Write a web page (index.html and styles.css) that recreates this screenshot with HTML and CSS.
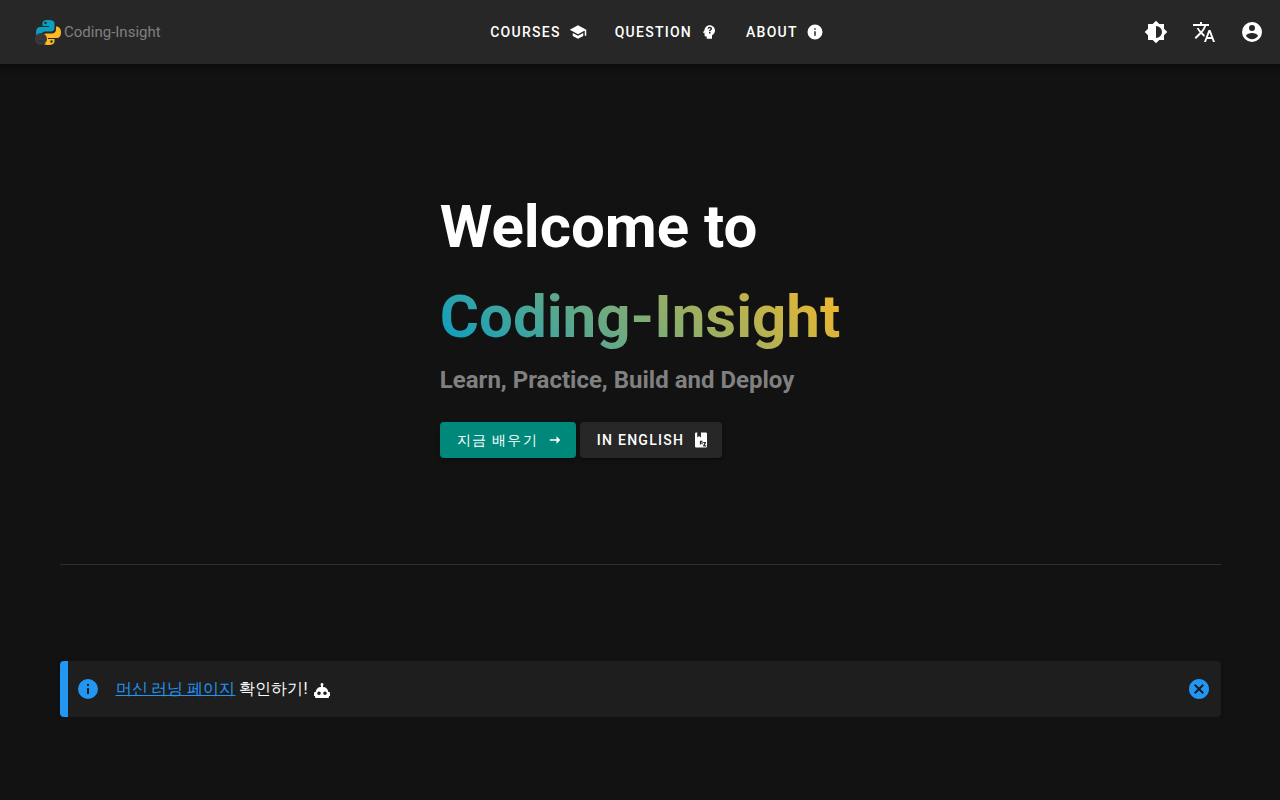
FILE: index.html
```html
<!DOCTYPE html>
<html lang="en">
<head>
<meta charset="utf-8">
<meta name="viewport" content="width=device-width, initial-scale=1">
<title>Coding-Insight</title>
<link rel="stylesheet" href="styles.css">
</head>
<body>
<header class="app-bar">
  <a class="brand" href="#">
    <svg class="brand-mark" viewBox="0 0 28 28" aria-hidden="true">
      <path fill="#0b9fc0" d="M14 2C9.500 2 8.500 3.500 8.500 5.500V8H15V9H6C3.500 9 2 11 2 14.500C2 17 3 19.500 5.500 19.500H7.500V17C7.500 15 9 13.500 11.500 13.500H17C19 13.500 20.500 12 20.500 10V5.500C20.500 3 18.500 2 14 2Z"/>
      <path fill="#fdb924" d="M22 8.500V11.500C22 14 20 15.500 18 15.500H12C10 15.500 8.500 17 8.500 19V23C8.500 26 11 27 14.500 27C18.500 27 20.500 25.500 20.500 23.500V21H14V20H23C25.500 20 27 18 27 14.500C27 11 25.500 8.500 22 8.500Z"/>
      <circle cx="11.500" cy="5" r="1.200" fill="#262626"/>
      <circle cx="17.500" cy="23.500" r="1.200" fill="#262626"/>
      <circle cx="7" cy="21" r="6" fill="#393939"/>
      <path fill="none" stroke="#262626" d="M4.500 19V20M9.500 19V20M4.500 22.500L6 23.500L7 22.500L8 23.500L9.500 22.500"/>
    </svg>
    <span>Coding-Insight</span>
  </a>
  <nav class="nav">
    <a class="btn" href="#">Courses
      <svg class="icon" viewBox="0 0 24 24" aria-hidden="true"><path d="M12,3L1,9L12,15L21,10.09V17H23V9M5,13.18V17.18L12,21L19,17.18V13.18L12,17L5,13.18Z"/></svg>
    </a>
    <a class="btn" href="#">Question
      <svg class="icon" viewBox="0 0 24 24" aria-hidden="true"><path fill-rule="evenodd" d="M13 3C9.230 3 6.190 5.950 6 9.660L4.080 12.190C3.840 12.500 4.080 13 4.500 13H6V16A2 2 0 0 0 8 18H9V21H16V16.310C18.370 15.190 20 12.800 20 10C20 6.140 16.880 3 13 3ZM14 14H12V12H14ZM15.800 8.600C15.500 9.100 14.800 9.500 14.400 9.900C14.100 10.200 14 10.500 14 11H12C12 10 12.300 9.300 12.900 8.800C13.500 8.300 14 8.100 14 7.500C14 7 13.600 6.700 13 6.700C12.400 6.700 12 7.100 12 7.700H10C10 6.100 11.300 5 13 5C14.700 5 16 6 16 7.500C16 7.900 15.900 8.300 15.800 8.600Z"/></svg>
    </a>
    <a class="btn" href="#">About
      <svg class="icon" viewBox="0 0 24 24" aria-hidden="true"><path d="M13,9H11V7H13M13,17H11V11H13M12,2A10,10 0 0,0 2,12A10,10 0 0,0 12,22A10,10 0 0,0 22,12A10,10 0 0,0 12,2Z"/></svg>
    </a>
  </nav>
  <div class="actions">
    <button class="icon-btn" type="button" aria-label="Toggle theme"><svg viewBox="0 0 24 24"><path d="M12,18V6A6,6 0 0,1 18,12A6,6 0 0,1 12,18M20,15.31L23.31,12L20,8.69V4H15.31L12,0.69L8.69,4H4V8.69L0.69,12L4,15.31V20H8.69L12,23.31L15.31,20H20V15.31Z"/></svg></button>
    <button class="icon-btn" type="button" aria-label="Language"><svg viewBox="0 0 24 24"><path d="M12.87,15.07L10.33,12.56L10.36,12.53C12.1,10.59 13.34,8.36 14.07,6H17V4H10V2H8V4H1V6H12.17C11.5,7.92 10.44,9.75 9,11.35C8.07,10.32 7.3,9.19 6.69,8H4.69C5.42,9.63 6.42,11.17 7.67,12.56L2.58,17.58L4,19L9,14L12.11,17.11L12.87,15.07M18.5,10H16.5L12,22H14L15.12,19H19.87L21,22H23L18.5,10M15.88,17L17.5,12.67L19.12,17H15.88Z"/></svg></button>
    <button class="icon-btn" type="button" aria-label="Account"><svg viewBox="0 0 24 24"><path d="M12,19.2C9.5,19.2 7.29,17.92 6,16C6.03,14 10,12.9 12,12.9C14,12.9 17.97,14 18,16C16.71,17.92 14.5,19.2 12,19.2M12,5A3,3 0 0,1 15,8A3,3 0 0,1 12,11A3,3 0 0,1 9,8A3,3 0 0,1 12,5M12,2A10,10 0 0,0 2,12A10,10 0 0,0 12,22A10,10 0 0,0 22,12C22,6.47 17.5,2 12,2Z"/></svg></button>
  </div>
</header>
<main class="page">
  <section class="hero">
    <div class="hero-body">
      <h1 class="title">Welcome to<br><span class="title-brand">Coding-Insight</span></h1>
      <p class="subtitle">Learn, Practice, Build and Deploy</p>
      <div class="hero-actions">
        <a class="btn btn-raised btn-primary" href="#">지금 배우기
          <svg class="icon" viewBox="0 0 24 24" aria-hidden="true"><path d="M14 16.940V12.940H5.080L5.050 10.930H14V6.940L19 11.940Z"/></svg>
        </a>
        <a class="btn btn-raised" href="#">In English
          <svg class="icon" viewBox="0 0 24 24" aria-hidden="true"><path fill-rule="evenodd" d="M5.500 2H7V8.500L9.500 6.500L12 8.500V2H18.500A1.500 1.500 0 0 1 20 3.500V20.500A1.500 1.500 0 0 1 18.500 22H5.500A1.500 1.500 0 0 1 4 20.500V3.500A1.500 1.500 0 0 1 5.500 2ZM10.500 13V18H12V16.500H13V18H14V13ZM12 14.200H13V15.300H12ZM15 14.500V16H16.500L15 19V20.500H19V19H17L18.500 16V14.500Z"/></svg>
        </a>
      </div>
    </div>
  </section>
  <hr class="divider">
  <section class="alert" role="status">
    <svg class="alert-icon" viewBox="0 0 24 24" aria-hidden="true"><path d="M13,9H11V7H13M13,17H11V11H13M12,2A10,10 0 0,0 2,12A10,10 0 0,0 12,22A10,10 0 0,0 22,12A10,10 0 0,0 12,2Z"/></svg>
    <p class="alert-text"><span><a href="#">머신 러닝 페이지</a> 확인하기!</span>
      <svg class="robot" viewBox="0 0 16 16" aria-hidden="true"><path fill-rule="evenodd" d="M8 0A1.500 1.500 0 0 1 9 2.600V4C12 4 14 6 14.300 9H15Q16 9 16 10V13H15V14Q15 15 14 15H2Q1 15 1 14V13H0V10Q0 9 1 9H1.700C2 6 4 4 7 4V2.600A1.500 1.500 0 0 1 8 0ZM5 8.500A1.800 1.800 0 1 0 5 12.100A1.800 1.800 0 1 0 5 8.500ZM11 8.500A1.800 1.800 0 1 0 11 12.100A1.800 1.800 0 1 0 11 8.500Z"/></svg>
    </p>
    <button class="alert-close" type="button" aria-label="Close"><svg viewBox="0 0 24 24"><path d="M12,2C17.53,2 22,6.47 22,12C22,17.53 17.53,22 12,22C6.47,22 2,17.53 2,12C2,6.47 6.47,2 12,2M15.59,7L12,10.59L8.41,7L7,8.41L10.59,12L7,15.59L8.41,17L12,13.41L15.59,17L17,15.59L13.41,12L17,8.41L15.59,7Z"/></svg></button>
  </section>
</main>
</body>
</html>
```
FILE: styles.css
```css
* { box-sizing: border-box; }
body {
  margin: 0;
  background: #121212;
  color: #fff;
  font: 16px/24px Roboto, sans-serif;
}
a { color: inherit; }
button { border: 0; background: none; color: inherit; padding: 0; cursor: pointer; }
svg { display: block; fill: currentColor; flex: none; }

.app-bar {
  display: flex;
  align-items: center;
  justify-content: space-between;
  height: 64px;
  padding: 0 4px 0 34px;
  background: #272727;
  box-shadow: 0 2px 4px -1px rgba(0, 0, 0, .2), 0 4px 5px rgba(0, 0, 0, .14), 0 1px 10px rgba(0, 0, 0, .12);
}
.brand {
  display: flex;
  align-items: center;
  gap: 2px;
  width: 144px;
  font-size: 15px;
  color: #808080;
  text-decoration: none;
}
.brand-mark { width: 28px; height: 28px; }
.nav, .actions { display: flex; }

.btn {
  display: inline-flex;
  align-items: center;
  gap: 8px;
  height: 36px;
  padding: 0 12px 0 16px;
  border-radius: 4px;
  font-size: 14px;
  font-weight: 500;
  letter-spacing: .09em;
  text-transform: uppercase;
  text-decoration: none;
  white-space: nowrap;
}
.icon { width: 18px; height: 18px; }
.icon-btn { display: grid; place-items: center; width: 48px; height: 48px; }
.icon-btn svg { width: 24px; height: 24px; }

.page { max-width: 1185px; margin: 0 auto; padding: 0 12px; }
.hero { display: flex; justify-content: center; padding: 118px 0 106px; }
.title { margin: 0; font-size: 60px; line-height: 90px; font-weight: 700; }
.title-brand {
  display: inline-block;
  background: linear-gradient(45deg, #0b9fc0 4%, #fdb924);
  -webkit-background-clip: text;
  background-clip: text;
  color: transparent;
}
.subtitle { margin: 0; color: #808080; font-size: 24px; line-height: 36px; font-weight: 700; }
.hero-actions { display: flex; gap: 4px; padding-top: 24px; }
.btn-raised {
  padding: 0 12px 0 17px;
  background: #272727;
  box-shadow: 0 3px 1px -2px rgba(0, 0, 0, .2), 0 2px 2px rgba(0, 0, 0, .14), 0 1px 5px rgba(0, 0, 0, .12);
}
.btn-primary { background: #00897b; }

.divider { margin: 0 0 96px; border: 0; border-top: 1px solid #2e2e2e; }
.alert {
  display: flex;
  align-items: center;
  min-height: 56px;
  padding: 0 10px 0 8px;
  border-left: 8px solid #2196f3;
  border-radius: 4px;
  background: #1e1e1e;
  box-shadow: 0 3px 1px -2px rgba(0, 0, 0, .2), 0 2px 2px rgba(0, 0, 0, .14), 0 1px 5px rgba(0, 0, 0, .12);
}
.alert-icon { width: 24px; height: 24px; margin-right: 16px; color: #2196f3; }
.alert-text { display: flex; align-items: center; gap: 6px; flex: 1; margin: 0; }
.alert-text a { color: #2196f3; }
.robot { width: 16px; height: 16px; margin-top: 4px; }
.alert-close { color: #2196f3; }
.alert-close svg { width: 24px; height: 24px; }
```
